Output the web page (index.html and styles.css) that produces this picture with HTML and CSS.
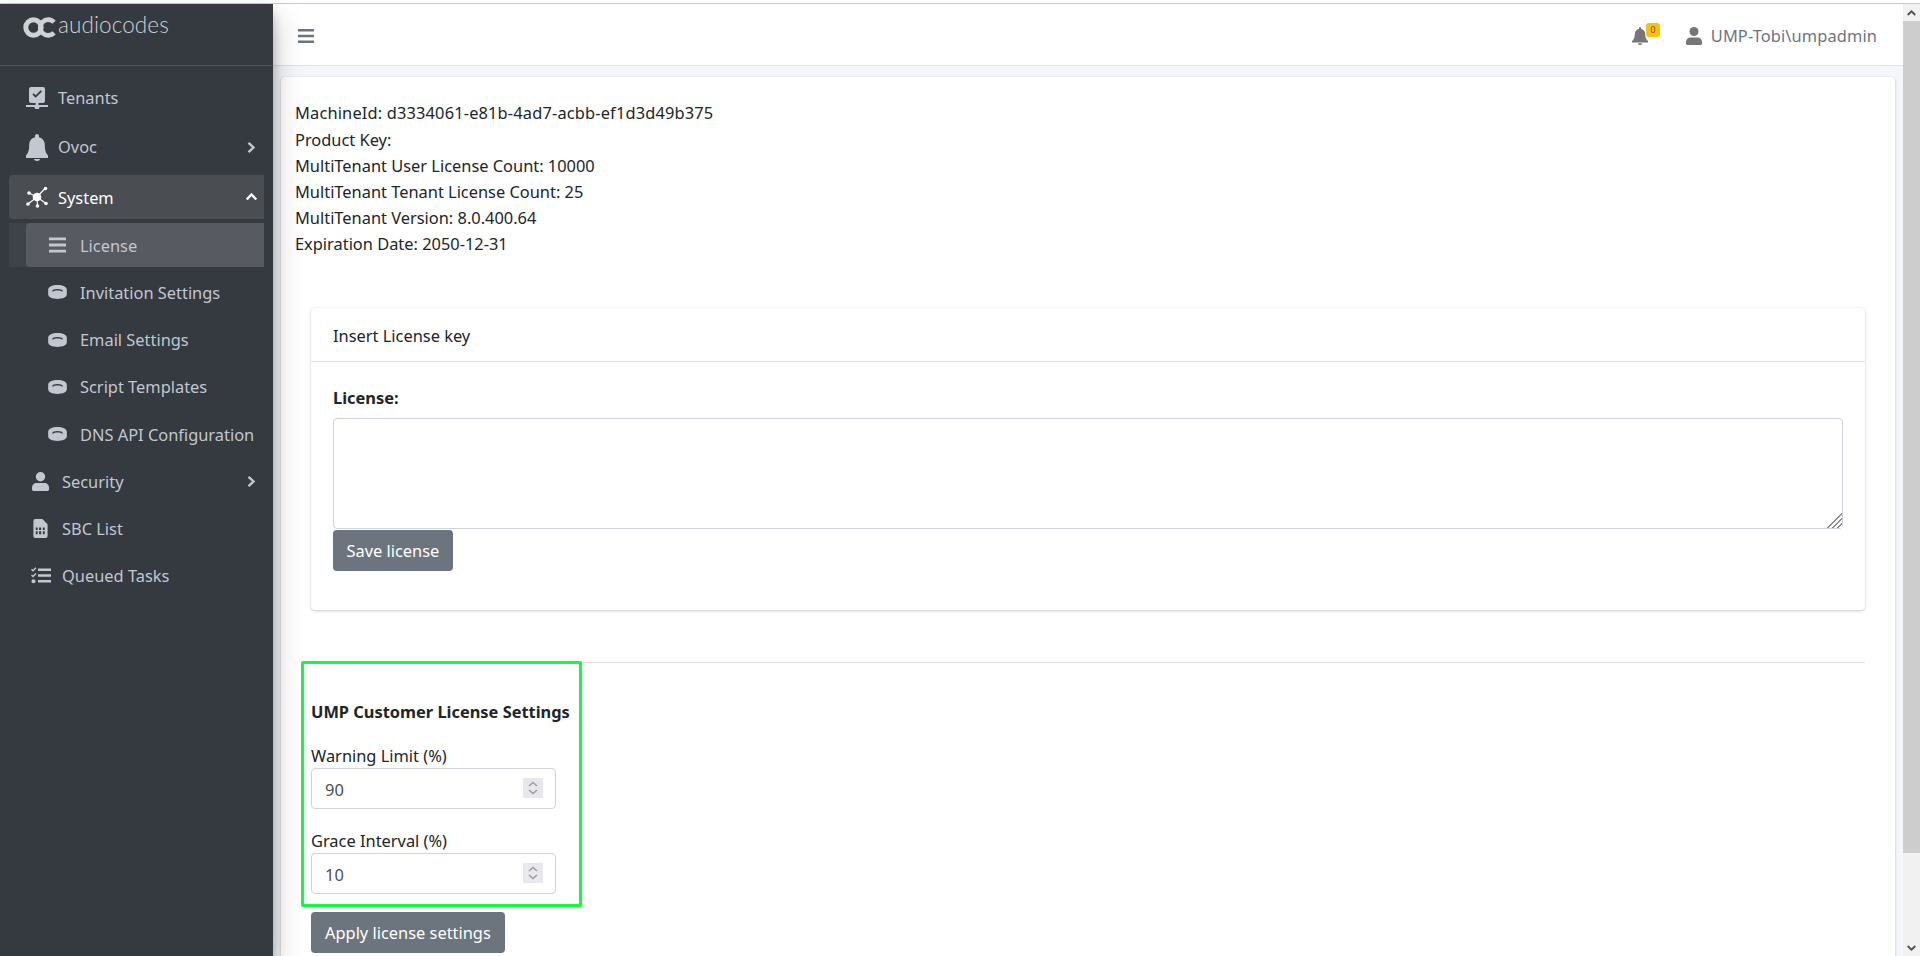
FILE: index.html
```html
<!DOCTYPE html>
<html lang="en">
<head>
<meta charset="utf-8">
<title>License</title>
<link rel="stylesheet" href="styles.css">
</head>
<body>
<div class="top-strip"></div>
<div class="app">
  <aside class="sidebar">
    <div class="brand">
      <svg class="brand-mark" viewBox="0 0 33 21"><circle cx="10.5" cy="10.5" r="7.7" fill="none" stroke="currentColor" stroke-width="5"/><path d="M31 5.2A7.9 7.9 0 1 0 31 15.8" fill="none" stroke="currentColor" stroke-width="4.6"/></svg>
      <span class="brand-text">audiocodes</span>
    </div>
    <nav class="nav">
      <a class="row row-top">
        <svg class="ico ico-lg" viewBox="0 0 22 22"><path fill-rule="evenodd" d="M5 0h12a2 2 0 0 1 2 2v12a2 2 0 0 1-2 2h-4.500v2H22v2h-8.500a2.500 2.500 0 0 1-5 0H0v-2h9.500v-2H5a2 2 0 0 1-2-2V2a2 2 0 0 1 2-2zm11 4.500-1.300-1.200-5 5-2-2L6.400 7.500l3.300 3.300z"/></svg>
        <span>Tenants</span>
      </a>
      <a class="row row-top row-ovoc">
        <svg class="ico ico-lg ico-bell" viewBox="0 0 22 27"><path d="M11 0c1.100 0 2 .9 2 2v1.200c3.600.9 5.800 4 5.800 7.800 0 6 1.300 8 3.200 10.500v2.500H0v-2.500C1.900 19 3.200 17 3.200 11c0-3.800 2.200-6.900 5.800-7.800V2c0-1.100.9-2 2-2zM8 25h6c0 1.200-1.300 2-3 2s-3-.8-3-2z"/></svg>
        <span class="grow">Ovoc</span>
        <svg class="chev" viewBox="0 0 8 11"><path d="M1.500.8 6.500 5.500 1.500 10.200" fill="none" stroke="currentColor" stroke-width="2.400"/></svg>
      </a>
      <a class="row row-top row-active">
        <svg class="ico ico-lg ico-hub" viewBox="0 0 22 22"><g stroke="currentColor" stroke-width="1.100"><path d="M11 11 3 7M11 11 19 2.500M11 11 2 18M11 11 20 17.500M11 11 11.500 20"/></g><circle cx="11" cy="11" r="4.300"/><circle cx="3" cy="7" r="1.800"/><circle cx="19.500" cy="2.500" r="1.800"/><circle cx="2" cy="18" r="1.800"/><circle cx="20" cy="17.500" r="1.800"/><circle cx="11.500" cy="20" r="1.800"/></svg>
        <span class="grow">System</span>
        <svg class="chev chev-up" viewBox="0 0 11 8"><path d="M.8 6.500 5.500 1.500 10.200 6.500" fill="none" stroke="currentColor" stroke-width="2.400"/></svg>
      </a>
      <div class="sub-wrap">
        <a class="row row-sub row-current">
          <svg class="ico-sub ico-bars" viewBox="0 0 18 16"><path d="M0 0h18v3H0zM0 6.500h18v3H0zM0 13h18v3H0z"/></svg>
          <span>License</span>
        </a>
      </div>
      <a class="row row-sub row-plain">
        <svg class="ico-sub" viewBox="0 0 20 15"><path fill-rule="evenodd" d="M10 0c5.500 0 10 2 10 5v5c0 3-4.500 5-10 5S0 13 0 10V5c0-3 4.500-5 10-5zm0 4.200c-3.200 0-5.600 1-5.600 2.100 0 .3.200.6.500.9C6 6.300 7.900 5.800 10 5.800s4 .5 5.100 1.400c.3-.3.500-.6.500-.9 0-1.100-2.400-2.100-5.600-2.100z"/></svg>
        <span>Invitation Settings</span>
      </a>
      <a class="row row-sub row-plain">
        <svg class="ico-sub" viewBox="0 0 20 15"><path fill-rule="evenodd" d="M10 0c5.500 0 10 2 10 5v5c0 3-4.500 5-10 5S0 13 0 10V5c0-3 4.500-5 10-5zm0 4.200c-3.200 0-5.600 1-5.600 2.100 0 .3.200.6.500.9C6 6.300 7.900 5.800 10 5.800s4 .5 5.100 1.400c.3-.3.500-.6.500-.9 0-1.100-2.400-2.100-5.600-2.100z"/></svg>
        <span>Email Settings</span>
      </a>
      <a class="row row-sub row-plain">
        <svg class="ico-sub" viewBox="0 0 20 15"><path fill-rule="evenodd" d="M10 0c5.500 0 10 2 10 5v5c0 3-4.500 5-10 5S0 13 0 10V5c0-3 4.500-5 10-5zm0 4.200c-3.200 0-5.600 1-5.600 2.100 0 .3.200.6.500.9C6 6.300 7.900 5.800 10 5.800s4 .5 5.100 1.400c.3-.3.500-.6.500-.9 0-1.100-2.400-2.100-5.600-2.100z"/></svg>
        <span>Script Templates</span>
      </a>
      <a class="row row-sub row-plain">
        <svg class="ico-sub" viewBox="0 0 20 15"><path fill-rule="evenodd" d="M10 0c5.500 0 10 2 10 5v5c0 3-4.500 5-10 5S0 13 0 10V5c0-3 4.500-5 10-5zm0 4.200c-3.200 0-5.600 1-5.600 2.100 0 .3.200.6.500.9C6 6.300 7.900 5.800 10 5.800s4 .5 5.100 1.400c.3-.3.500-.6.500-.9 0-1.100-2.400-2.100-5.600-2.100z"/></svg>
        <span>DNS API Configuration</span>
      </a>
      <a class="row row-low">
        <svg class="ico-low" viewBox="0 0 18 20"><circle cx="9" cy="5" r="5"/><path d="M5 11.500h8c2.800 0 5 2.200 5 5V18.500c0 .8-.7 1.500-1.500 1.500h-15C.7 20 0 19.300 0 18.500V16.500c0-2.800 2.200-5 5-5z"/></svg>
        <span class="grow">Security</span>
        <svg class="chev" viewBox="0 0 8 11"><path d="M1.500.8 6.500 5.500 1.500 10.200" fill="none" stroke="currentColor" stroke-width="2.400"/></svg>
      </a>
      <a class="row row-low">
        <svg class="ico-low" viewBox="0 0 18 20"><path fill-rule="evenodd" d="M3.500 0H11l5.500 5.500V18a2 2 0 0 1-2 2h-11a2 2 0 0 1-2-2V2a2 2 0 0 1 2-2zM4 9v2.500h2V9zm3.500 0v2.500h2.200V9zM11.500 9v2.500h2V9zM4 13v3h2v-3zm3.500 0v3h2.200v-3zm4 0v3h2v-3z"/></svg>
        <span>SBC List</span>
      </a>
      <a class="row row-low row-tasks">
        <svg class="ico-tasks" viewBox="0 0 20 17"><path d="M7 1.500h13v2.400H7zM7 7.300h13v2.400H7zM7 13.100h13v2.400H7z"/><path d="M.5 2.300 2 3.800 5 .7M.5 8 2 9.500 5 6.400" fill="none" stroke="currentColor" stroke-width="1.400"/><circle cx="2.500" cy="14.300" r="2"/></svg>
        <span>Queued Tasks</span>
      </a>
    </nav>
  </aside>

  <main class="main">
    <header class="topbar">
      <svg class="burger" viewBox="0 0 16 14"><path d="M0 0h16v2.400H0zM0 5.800h16v2.400H0zM0 11.600h16V14H0z"/></svg>
      <div class="topbar-right">
        <div class="bell-wrap">
          <svg class="top-ico" viewBox="0 0 16 18"><path d="M8 0c.6 0 1 .4 1 1v.8c2.600.5 4.200 2.700 4.200 5.400 0 3.500 1 5 2.800 6.800v1.500H0V14c1.800-1.800 2.800-3.300 2.800-6.800 0-2.700 1.600-4.900 4.200-5.400V1c0-.6.400-1 1-1zM6 16.200h4C10 17.300 9.100 18 8 18s-2-.7-2-1.800z"/></svg>
          <span class="badge">0</span>
        </div>
        <svg class="top-ico user-ico" viewBox="0 0 16 18"><circle cx="8" cy="4.500" r="4.500"/><path d="M4.500 10.500h7c2.500 0 4.500 2 4.500 4.500v1.500c0 .8-.7 1.500-1.500 1.500h-13C.7 18 0 17.300 0 16.500V15c0-2.500 2-4.500 4.500-4.500z"/></svg>
        <span class="user-name">UMP-Tobi\umpadmin</span>
      </div>
    </header>

    <div class="content">
      <section class="card">
        <div class="facts">
          <div class="fact-first">MachineId: d3334061-e81b-4ad7-acbb-ef1d3d49b375</div>
          <div>Product Key:</div>
          <div>MultiTenant User License Count: 10000</div>
          <div>MultiTenant Tenant License Count: 25</div>
          <div>MultiTenant Version: 8.0.400.64</div>
          <div>Expiration Date: 2050-12-31</div>
        </div>

        <section class="inner-card">
          <div class="inner-head">Insert License key</div>
          <div class="inner-body">
            <label class="strong" for="lic">License:</label>
            <textarea id="lic" class="textarea"></textarea>
            <button class="btn btn-save" type="button">Save license</button>
          </div>
        </section>

        <hr class="rule">

        <section class="settings">
          <div class="highlight"></div>
          <h2 class="settings-title">UMP Customer License Settings</h2>
          <label class="field-label" for="warn">Warning Limit (%)</label>
          <div class="num-wrap">
            <input id="warn" class="num" type="number" value="90">
            <svg class="spin" viewBox="0 0 20 20"><path d="M6 8 10 4.500 14 8M6 12 10 15.500 14 12" fill="none" stroke="#9b9ba3" stroke-width="1.500"/></svg>
          </div>
          <label class="field-label field-second" for="grace">Grace Interval (%)</label>
          <div class="num-wrap">
            <input id="grace" class="num" type="number" value="10">
            <svg class="spin" viewBox="0 0 20 20"><path d="M6 8 10 4.500 14 8M6 12 10 15.500 14 12" fill="none" stroke="#9b9ba3" stroke-width="1.500"/></svg>
          </div>
          <button class="btn btn-apply" type="button">Apply license settings</button>
        </section>
      </section>
    </div>
  </main>

  <div class="scrollbar">
    <div class="sb-btn"><svg class="sb-arrow" viewBox="0 0 9 6"><path d="M.7 5 4.500 1.300 8.300 5" fill="none" stroke="currentColor" stroke-width="1.800"/></svg></div>
    <div class="sb-thumb"></div>
    <div class="sb-track"></div>
    <div class="sb-btn"><svg class="sb-arrow" viewBox="0 0 9 6"><path d="M.7 1 4.500 4.700 8.300 1" fill="none" stroke="currentColor" stroke-width="1.800"/></svg></div>
  </div>
</div>
</body>
</html>
```

FILE: styles.css
```css
* { box-sizing: border-box; }
html, body { margin: 0; height: 956px; overflow: hidden; background: #fff; }
body { font-family: "Noto Sans", "Open Sans", sans-serif; font-size: 16.400px; color: #212529; }
.top-strip { height: 4px; background: #fff; border-bottom: 1px solid #ccc; }
.app { display: flex; height: 952px; }

.sidebar { width: 273px; flex: none; background: #343a40; color: #c2c7d0; position: relative; z-index: 2; box-shadow: 0 14px 28px rgba(0,0,0,.25), 0 10px 10px rgba(0,0,0,.22); }
.brand { height: 62px; border-bottom: 1px solid #4b545c; padding: 13px 0 0 23px; display: flex; align-items: flex-start; color: #cfd2d5; }
.brand-mark { width: 33px; height: 21px; flex: none; }
.brand-text { font-family: "Lato", sans-serif; font-weight: 300; font-size: 22.500px; line-height: 16px; margin-left: 2px; letter-spacing: .1px; }
.nav { display: flex; flex-direction: column; padding-top: 10px; }
.row { display: flex; align-items: center; height: 44px; flex: none; }
.grow { flex: 1; }
.row-top { padding-left: 26px; margin: 0 9px 0 0; gap: 10px; }
.row-top span { margin-bottom: 2px; }
.row-ovoc { margin-top: 5px; margin-bottom: 6px; }
.row-active { margin-left: 9px; padding-left: 17px; background: #4a4e53; color: #fff; border-radius: 4px 0 0 4px; }
.row-active span { margin-bottom: 0; }
.row-active .chev-up { margin-right: 7.500px; color: #fff; }
.ico { width: 22px; height: 22px; fill: currentColor; flex: none; }
.ico-bell { height: 27px; }
.chev { width: 8px; height: 11px; margin-right: 9px; flex: none; }
.chev-up { width: 11px; height: 8px; }
.sub-wrap { margin: 4px 9px 0 9px; background: #3e4349; padding-left: 17px; }
.row-sub { gap: 14px; }
.row-current { padding-left: 23px; background: #575a60; border-radius: 4px 0 0 4px; }
.row-plain { margin-top: 3.300px; padding-left: 48px; gap: 13px; }
.ico-sub { width: 19px; height: 14px; fill: currentColor; flex: none; }
.ico-bars { width: 17px; height: 16px; }
.row-low { margin-top: 3.300px; padding-left: 32px; margin-right: 9px; gap: 13px; }
.ico-low { width: 17px; height: 19px; fill: currentColor; flex: none; }
.row-tasks { padding-left: 31px; gap: 11px; margin-top: 2.800px; }
.ico-tasks { width: 20px; height: 17px; fill: currentColor; flex: none; }

.main { flex: 1; min-width: 0; display: flex; flex-direction: column; background: #f4f6f9; }
.topbar { height: 62px; flex: none; background: #fff; border-bottom: 1px solid #dee2e6; display: flex; align-items: center; padding: 2px 26px 0 25px; justify-content: space-between; }
.burger { width: 16px; height: 14px; fill: #6c757d; }
.topbar-right { display: flex; align-items: center; }
.bell-wrap { position: relative; width: 16px; height: 18px; margin-right: 38px; }
.top-ico { width: 16px; height: 18px; fill: #777; display: block; }
.badge { position: absolute; left: 14px; top: -4px; width: 14px; height: 14px; background: #ffc107; border-radius: 3px; font-size: 9px; line-height: 14px; text-align: center; color: #555; }
.user-ico { margin-right: 9px; }
.user-name { color: #6c757d; letter-spacing: .12px; }

.content { flex: 1; min-height: 0; padding: 11px 8px 0; overflow: hidden; }
.card { background: #fff; border-radius: 4px; box-shadow: 0 0 1px rgba(0,0,0,.125), 0 1px 3px rgba(0,0,0,.2); padding: 23px 30px 60px 14px; }
.facts { line-height: 26px; }
.fact-first { margin-bottom: 1px; letter-spacing: .16px; }
.inner-card { margin: 51px 0 0 16px; height: 302px; background: #fff; border-radius: 4px; box-shadow: 0 0 1px rgba(0,0,0,.125), 0 1px 3px rgba(0,0,0,.2); }
.inner-head { height: 54px; line-height: 55px; padding-left: 22px; border-bottom: 1px solid #dee2e6; }
.inner-body { padding: 24px 22px 0; }
.strong { display: block; font-weight: 700; line-height: 24px; margin-bottom: 8px; }
.textarea { display: block; width: 100%; height: 111px; border: 1px solid #ced4da; border-radius: 4px; background: #fff; font: inherit; margin: 0; }
.textarea::-webkit-resizer { background: linear-gradient(135deg, #fff 50%, transparent 50%), repeating-linear-gradient(135deg, #8d8d8d 0 1.500px, #fff 1.500px 3.500px); }
.btn { display: block; border: 0; border-radius: 4px; background: #6c757d; color: #fff; font: inherit; padding: 0 14px; height: 41px; }
.btn-save { margin-top: 1px; padding: 0 13.500px; }
.rule { margin: 52px 0 0 16px; border: 0; border-top: 1px solid #dee2e6; height: 1px; }
.settings { position: relative; margin-left: 16px; }
.highlight { position: absolute; left: -10px; top: -2px; width: 281px; height: 246px; border: 3px solid #0dff3c; border-radius: 2px; pointer-events: none; }
.settings-title { margin: 0; padding-top: 37px; font-size: inherit; font-weight: 700; line-height: 24px; }
.field-label { display: block; margin-top: 20px; line-height: 24px; }
.field-second { margin-top: 20px; }
.num-wrap { position: relative; width: 245px; }
.num { display: block; width: 100%; height: 41px; padding: 1px 13px 0; border: 1px solid #ced4da; border-radius: 4px; font: inherit; color: #495057; background: #fff; }
.num::-webkit-inner-spin-button { -webkit-appearance: none; appearance: none; }
.spin { position: absolute; right: 13px; top: 10px; width: 20px; height: 20px; background: #e8e8ec; }
.btn-apply { margin-top: 18px; }

.scrollbar { width: 17px; flex: none; display: flex; flex-direction: column; background: #f1f1f1; }
.sb-btn { height: 17px; flex: none; background: #f1f1f1; display: flex; align-items: center; justify-content: center; color: #505050; }
.sb-arrow { width: 9px; height: 6px; }
.sb-thumb { height: 832px; flex: none; background: #cdcdcd; }
.sb-track { flex: 1; }
```
